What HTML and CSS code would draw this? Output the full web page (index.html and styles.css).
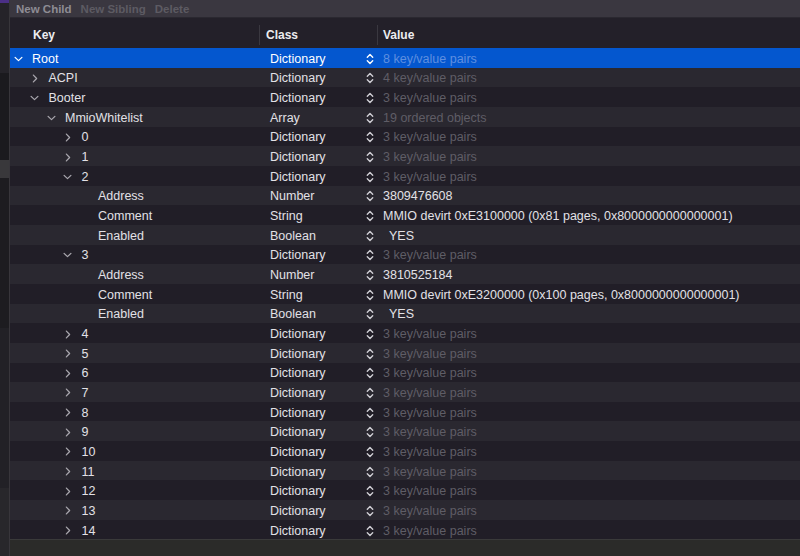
FILE: index.html
```html
<!DOCTYPE html>
<html>
<head>
<meta charset="utf-8">
<link rel="stylesheet" href="styles.css">
</head>
<body>
<div class="app">
  <aside class="side">
    <div class="side-top"></div>
    <div class="side-band b1"></div>
    <div class="side-band b2"></div>
    <div class="side-band b3"></div>
    <div class="side-band b4"></div>
    <div class="side-band b5"></div>
    <div class="side-band b6"></div>
  </aside>
  <main class="main">
    <div class="toolbar">
      <span class="tb-btn active">New Child</span>
      <span class="tb-btn">New Sibling</span>
      <span class="tb-btn">Delete</span>
    </div>
    <div class="header">
      <div class="hcell hkey">Key</div>
      <div class="hcell hclass">Class</div>
      <div class="hcell hvalue">Value</div>
    </div>
    <div class="rows" id="rows"></div>
    <div class="footer"></div>
  </main>
</div>
<svg width="0" height="0" style="position:absolute">
  <defs>
    <symbol id="down" viewBox="0 0 10 6"><path d="M1.2 1.2 L5 4.8 L8.8 1.2" fill="none" stroke="currentColor" stroke-width="1.4" stroke-linecap="round" stroke-linejoin="round"/></symbol>
    <symbol id="right" viewBox="0 0 6 10"><path d="M1.2 1.2 L4.8 5 L1.2 8.8" fill="none" stroke="currentColor" stroke-width="1.4" stroke-linecap="round" stroke-linejoin="round"/></symbol>
    <symbol id="step" viewBox="0 0 8 12"><path d="M1.3 4.3 L4 1.6 L6.7 4.3 M1.3 7.7 L4 10.4 L6.7 7.7" fill="none" stroke="currentColor" stroke-width="1.4" stroke-linecap="round" stroke-linejoin="round"/></symbol>
  </defs>
</svg>
<script src="app.js"></script>
</body>
</html>
```

FILE: app.js
```js
const data = [
  [0,'down','Root','Dictionary','8 key/value pairs',true],
  [1,'right','ACPI','Dictionary','4 key/value pairs',true],
  [1,'down','Booter','Dictionary','3 key/value pairs',true],
  [2,'down','MmioWhitelist','Array','19 ordered objects',true],
  [3,'right','0','Dictionary','3 key/value pairs',true],
  [3,'right','1','Dictionary','3 key/value pairs',true],
  [3,'down','2','Dictionary','3 key/value pairs',true],
  [4,'','Address','Number','3809476608',false],
  [4,'','Comment','String','MMIO devirt 0xE3100000 (0x81 pages, 0x8000000000000001)',false],
  [4,'','Enabled','Boolean','YES',false,true],
  [3,'down','3','Dictionary','3 key/value pairs',true],
  [4,'','Address','Number','3810525184',false],
  [4,'','Comment','String','MMIO devirt 0xE3200000 (0x100 pages, 0x8000000000000001)',false],
  [4,'','Enabled','Boolean','YES',false,true]
];
for (let i = 4; i <= 14; i++) data.push([3,'right',String(i),'Dictionary','3 key/value pairs',true]);

const rows = document.getElementById('rows');
data.forEach((d, i) => {
  const [lvl, chev, key, cls, val, dim, bool] = d;
  const row = document.createElement('div');
  row.className = 'row ' + (i === 0 ? 'selected' : (i % 2 ? 'odd' : 'even'));
  const chevHtml = chev ? `<svg class="chev ${chev}"><use href="#${chev}"/></svg>` : '';
  row.innerHTML =
    `<div class="kcell lvl${lvl}"><span class="chevbox">${chevHtml}</span><span class="ktext">${key}</span></div>` +
    `<div class="ccell"><span>${cls}</span><svg class="step"><use href="#step"/></svg></div>` +
    `<div class="vcell${dim ? ' dim' : ''}${bool ? ' bool' : ''}">${val}</div>`;
  rows.appendChild(row);
});
```

FILE: styles.css
```css
* { box-sizing: border-box; }
html, body { margin: 0; padding: 0; width: 800px; height: 556px; overflow: hidden; }
body {
  font-family: "Liberation Sans", Arial, sans-serif;
  font-size: 12.5px;
  color: #e2e1e6;
  background: #1f1d22;
}
.app { display: flex; width: 800px; height: 556px; }

.side {
  width: 10px;
  flex: none;
  background: #1e1c21;
  border-right: 1px solid #38363b;
  display: flex;
  flex-direction: column;
}
.side-top { height: 3px; background: #4b2f86; }
.side-band { flex: none; }
.b1 { height: 70px; background: #252329; }
.b2 { height: 87px; background: #1b1a1e; }
.b3 { height: 18px; background: #39383b; }
.b4 { height: 150px; background: #1d1c20; }
.b5 { height: 160px; background: #222126; }
.b6 { flex: 1; background: #28272b; }

.main { flex: 1; display: flex; flex-direction: column; min-width: 0; }

.toolbar {
  height: 18px;
  flex: none;
  background: #3a3740;
  border-bottom: 1px solid #2a2830;
  display: flex;
  align-items: center;
  gap: 9px;
  padding-left: 6px;
  font-weight: bold;
  font-size: 11.5px;
  color: #5d5b63;
}
.tb-btn.active { color: #8e8c94; }

.header {
  height: 30px;
  flex: none;
  background: #232029;
  display: grid;
  grid-template-columns: 250px 118px 1fr;
  align-items: center;
  font-size: 12px;
  color: #ececef;
  font-weight: bold;
  padding-top: 3px;
}
.hcell { height: 100%; display: flex; align-items: center; }
.hkey { padding-left: 23px; border-right: 1px solid #3a3840; height: 20px; }
.hclass { padding-left: 6px; border-right: 1px solid #3a3840; height: 20px; }
.hvalue { padding-left: 5px; }

.rows { flex: none; display: flex; flex-direction: column; }
.row {
  height: 19.67px;
  padding-top: 2px;
  display: grid;
  grid-template-columns: 250px 118px 1fr;
  align-items: center;
  white-space: nowrap;
}
.row.even { background: #211e27; }
.row.odd { background: #2a2830; }
.row.selected { background: #0457cf; color: #ffffff; }

.kcell { display: flex; align-items: center; padding-left: 3px; }
.lvl1 { padding-left: 19.5px; }
.lvl2 { padding-left: 36px; }
.lvl3 { padding-left: 52.5px; }
.lvl4 { padding-left: 69px; }
.chevbox { width: 10px; height: 10px; margin-right: 9px; display: flex; align-items: center; justify-content: center; color: #a9a7ae; }
.selected .chevbox { color: #ffffff; }
.chev.down { width: 9px; height: 6px; }
.chev.right { width: 6px; height: 9px; }

.ccell { display: flex; align-items: center; justify-content: space-between; padding-left: 10px; padding-right: 4px; }
.step { width: 8px; height: 12px; color: #cfced4; }
.selected .step { color: #ffffff; }

.vcell { padding-left: 5px; }
.vcell.dim { color: #5f5d66; }
.selected .vcell.dim { color: #5f8fe0; }
.vcell.bool { padding-left: 11px; }

.footer { flex: 1; background: #2b2b29; border-top: 1px solid #3a3a3a; }
```
